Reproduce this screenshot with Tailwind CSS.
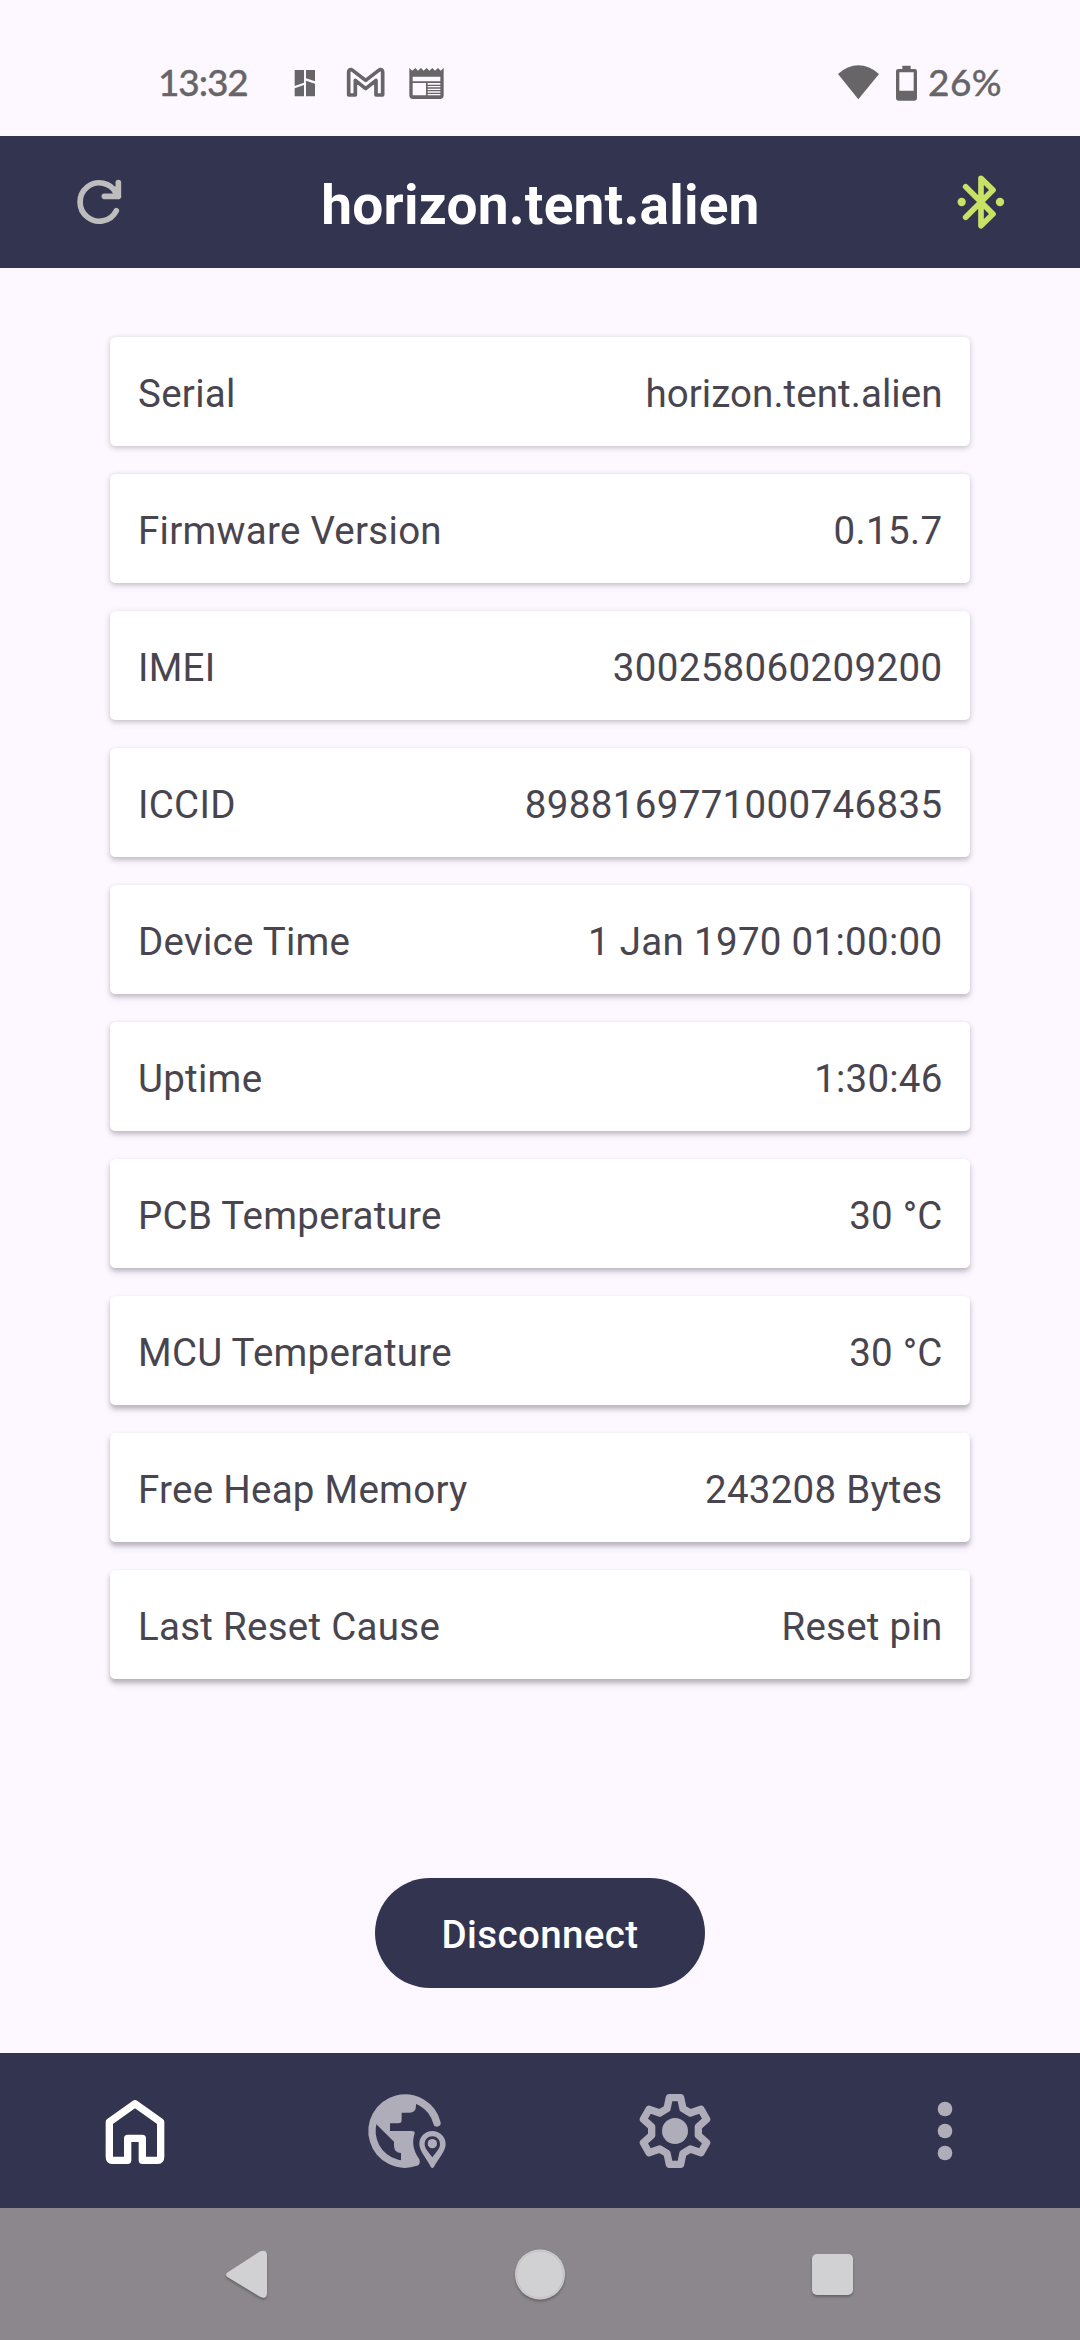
<!DOCTYPE html>
<html lang="en">
  <head>
    <meta charset="UTF-8" />
    <meta name="viewport" content="width=device-width, initial-scale=1.0" />
    <title>horizon.tent.alien</title>
    <script src="https://cdn.jsdelivr.net/npm/@tailwindcss/browser@4"></script>
  </head>
  <body
    class="w-[1080px] h-[2340px] overflow-hidden bg-[#fdf8ff] font-[Roboto,sans-serif] flex flex-col"
  >
    <!-- status bar -->
    <div
      class="h-[136px] shrink-0 pt-[50px] pl-[158px] pr-[78px] flex items-start justify-between text-[#676568] font-[Lato,sans-serif] font-medium text-[37px] leading-[64px] [-webkit-text-stroke:0.3px_#676568]"
    >
      <div class="flex">
        <span class="w-[122px] tracking-[-1.1px]">13:32</span>
        <svg class="w-[180px] h-[70px]" viewBox="420 0 540 210" fill="currentColor">
          <path d="M464 60H492V98L464 108ZM498 60H525V94L498 85ZM464 115L492 105V139H464ZM498 92L525 101V139H498Z" />
          <path
            d="M626 135V66Q626 58 634 59L638 61L677 91L716 61L720 59Q728 58 728 66V135H708V91L677 116L646 91V135Z"
            fill="none"
            stroke="currentColor"
            stroke-width="11"
            stroke-linejoin="round"
          />
          <path
            fill-rule="evenodd"
            d="M808 54L817 62L826 54L834 62L843 54L851 62L860 54L868 62L877 54L885 62L894 54L902 62L911 54V136Q911 147 900 147H819Q808 147 808 136ZM818 80V94H901V80ZM818 99V136H858V99ZM863 99V104H901V99ZM863 108V112H901V108ZM863 116V120H901V116ZM863 124V128H901V124ZM863 132V136H901V132Z"
          />
        </svg>
      </div>
      <div class="flex">
        <svg class="w-[92px] h-[70px]" viewBox="45 0 276 210" fill="currentColor">
          <path d="M51 72Q80 46 112 46Q145 46 174 72L112 148Z" />
          <path
            fill-rule="evenodd"
            d="M244 47H269V57H281Q288 57 288 64V145Q288 152 281 152H232Q225 152 225 145V64Q225 57 232 57H244ZM235 67V122H278V67Z"
          />
        </svg>
        <span class="tracking-[0.4px]">26%</span>
      </div>
    </div>

    <!-- app bar -->
    <header
      class="h-[132px] shrink-0 pl-[66px] pr-[66px] flex items-center justify-between bg-[#33344f] text-white"
    >
      <svg
        class="size-[66px]"
        viewBox="48 117 198 198"
        fill="none"
        stroke="#bdbdbd"
        stroke-width="17"
        stroke-linecap="round"
        stroke-linejoin="round"
      >
        <path d="M199 242A57.500 57.500 0 1 1 199 190M205 158V199H163" />
        <path d="M192 178L205 199" />
      </svg>
      <h1 class="text-[55px] leading-[64px] font-bold tracking-[0.2px] pt-[5px] pl-px">horizon.tent.alien</h1>
      <svg
        class="size-[66px]"
        viewBox="744 117 198 198"
        fill="none"
        stroke="#c7e264"
        stroke-width="17"
        stroke-linecap="round"
        stroke-linejoin="round"
      >
        <path d="M797 170L879 252L843 287V145L879 180L797 262" />
        <circle cx="785" cy="216" r="12.500" fill="#c7e264" stroke="none" />
        <circle cx="900" cy="216" r="12.500" fill="#c7e264" stroke="none" />
      </svg>
    </header>

    <main class="grow flex flex-col items-center pt-[69px] pb-[65px] justify-between">
      <div id="rows" class="w-[860px] flex flex-col gap-7"></div>
      <button
        class="w-[330px] h-[110px] rounded-full bg-[#33344f] text-white text-[38.5px] font-medium tracking-[0.4px] pt-[4px]"
      >
        Disconnect
      </button>
    </main>

    <!-- tabs -->
    <nav class="h-[155px] shrink-0 grid grid-cols-4 items-center justify-items-center bg-[#33344f] text-[#aeadb9]">
      <svg
        class="size-[88px]"
        viewBox="33 51 264 264"
        fill="none"
        stroke="#fff"
        stroke-width="22"
        stroke-linejoin="round"
      >
        <path d="M88 156L165 101L242 156V260Q242 271 231 271H187V205H143V271H99Q88 271 88 260Z" />
      </svg>
      <svg class="size-[88px]" viewBox="33 51 264 264" fill="currentColor">
        <path
          d="M261 159A99 99 0 1 0 197 277"
          fill="none"
          stroke="currentColor"
          stroke-width="22"
          stroke-linecap="round"
        />
        <path d="M198 96V107Q198 128 178 128H155V150Q155 160 145 160H120V183H185Q195 183 194 190C186 215 188 240 208 268Q213 282 200 286L153 290V249Q132 249 132 226V215L76 160Q90 95 165 84Z" />
        <path
          fill-rule="evenodd"
          d="M247 183C225 183 208 200 208 222C208 243 228 262 242 290Q247 298 252 290C268 262 287 243 287 222C287 200 269 183 247 183ZM247 199C234 199 224 209 224 222C224 237 236 246 247 262C258 246 270 237 270 222C270 209 260 199 247 199Z"
        />
        <circle cx="247" cy="221" r="14" />
      </svg>
      <svg class="size-[88px]" viewBox="-132 -132 264 264" fill="currentColor">
        <path
          d="M-17 -100L17 -100L24 -67L46 -54L78 -65L95 -35L70 -13V13L95 35L78 65L46 54L24 67L17 100H-17L-24 67L-46 54L-78 65L-95 35L-70 13V-13L-95 -35L-78 -65L-46 -54L-24 -67Z"
          fill="none"
          stroke="currentColor"
          stroke-width="22"
          stroke-linejoin="round"
        />
        <circle r="39" />
      </svg>
      <svg class="size-[88px]" viewBox="63 51 264 264" fill="currentColor">
        <circle cx="195" cy="117" r="22" />
        <circle cx="195" cy="183" r="22" />
        <circle cx="195" cy="249" r="22" />
      </svg>
    </nav>

    <!-- system navigation -->
    <div class="h-[132px] shrink-0 bg-[#8b878d] flex items-center justify-between pl-[217px] pr-[217px] text-[#d1d1d3]">
      <svg class="size-[60px] drop-shadow-[0_2px_1px_rgba(0,0,0,0.25)]" viewBox="0 0 60 60" fill="currentColor">
        <path d="M12 27.500L42.500 7.700Q50 4.500 50 12V49Q50 56 43 52.800L12 34Q6 30.500 12 27.500Z" />
      </svg>
      <svg class="size-[60px] drop-shadow-[0_2px_1px_rgba(0,0,0,0.25)]" viewBox="0 0 60 60" fill="currentColor">
        <circle cx="30" cy="30.500" r="25" />
        <circle cx="30" cy="30.500" r="23.500" fill="none" stroke="#bfbfc2" />
      </svg>
      <svg class="size-[60px] drop-shadow-[0_2px_1px_rgba(0,0,0,0.25)]" viewBox="0 0 60 60" fill="currentColor">
        <rect x="9" y="10" width="41" height="41" rx="5" />
      </svg>
    </div>

    <script>
      // label, value, value tracking
      const info = [
        ["Serial", "horizon.tent.alien", "tracking-[0.05px]"],
        ["Firmware Version", "0.15.7", "tracking-[0.35px]"],
        ["IMEI", "300258060209200", "tracking-[0.35px]"],
        ["ICCID", "8988169771000746835", "tracking-[0.35px]"],
        ["Device Time", "1 Jan 1970 01:00:00", "tracking-[0.3px]"],
        ["Uptime", "1:30:46", "tracking-[0.2px]"],
        ["PCB Temperature", "30 °C", "tracking-[0.2px]"],
        ["MCU Temperature", "30 °C", "tracking-[0.2px]"],
        ["Free Heap Memory", "243208 Bytes", "tracking-[0.25px]"],
        ["Last Reset Cause", "Reset pin", "tracking-[0.25px]"],
      ];

      const shadow = (i) =>
        `0 ${(1.5 + i * 0.25).toFixed(2)}px 4px rgba(40,30,50,${(0.17 + i * 0.01).toFixed(2)}), ` +
        `0 ${(2 + i * 0.35).toFixed(2)}px 9px rgba(40,30,50,0.09)`;

      document.getElementById("rows").innerHTML = info
        .map(
          ([label, value, tracking], i) => `
          <div
            class="h-[109px] pl-[28px] pr-[27.5px] pt-[4px] flex items-center justify-between rounded-[5.5px] bg-white text-[#49454f] text-[38.5px] leading-[55px]"
            style="box-shadow: ${shadow(i)}"
          >
            <span class="tracking-[0.27px]">${label}</span>
            <span class="${tracking}">${value}</span>
          </div>`
        )
        .join("");
    </script>
  </body>
</html>
